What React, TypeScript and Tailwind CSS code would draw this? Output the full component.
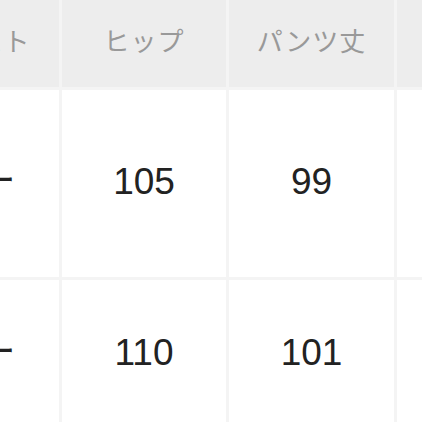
import React from "react";

const headers = ["ウエスト", "ヒップ", "パンツ丈", "股下"];

const rows = [
  { key: "m", cells: ["64ー", "105", "99", "76"], height: "h-[187px]" },
  { key: "l", cells: ["68ー", "110", "101", "77"], height: "h-[149px]" },
];

const jpFont = "font-['Noto_Sans_CJK_JP','Noto_Sans',sans-serif]";
const numFont = "font-['Liberation_Sans','Noto_Sans_CJK_JP',sans-serif]";

const App = () => {
  return (
    <div className="w-[422px] h-[422px] overflow-hidden bg-white">
      <div className="ml-[-106px] w-[700px] grid grid-cols-[165px_164px_165px_165px] gap-x-[3px] gap-y-[3px] bg-[#f4f4f4]">
        {headers.map((label) => (
          <div
            key={label}
            className={`h-[87px] bg-[#ededed] flex items-center justify-center pb-[9px] text-[26px] text-[#999999] tracking-[1px] ${jpFont}`}
          >
            {label}
          </div>
        ))}
        {rows.map((row) =>
          row.cells.map((value, i) => (
            <div
              key={row.key + i}
              className={`${row.height} bg-white flex items-center justify-center pb-[4px] text-[37px] text-[#222222] ${numFont}`}
            >
              {value}
            </div>
          ))
        )}
      </div>
    </div>
  );
};

export default App;
